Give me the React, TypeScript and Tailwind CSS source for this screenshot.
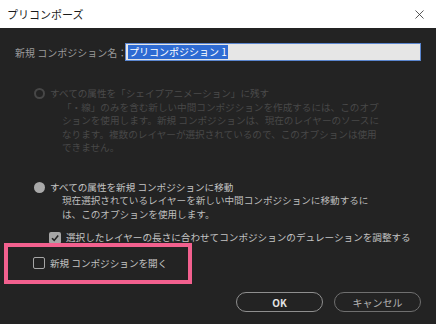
import { X } from "lucide-react";

const jp = "font-['Noto_Sans_CJK_JP','Noto_Sans_CJK_SC',sans-serif]";

const App = () => {
  return (
    <div className={`w-[436px] h-[324px] bg-[#232323] flex flex-col relative overflow-hidden ${jp}`}>
      <div className="h-[28px] bg-white flex items-center justify-between pl-[7px] pr-[9px]">
        <span className="text-[11px] text-[#1b1b1b] leading-none">プリコンポーズ</span>
        <X size={15} strokeWidth={1.3} className="text-[#333]" />
      </div>

      <div className="flex items-center mt-[15px] pl-[15px] pr-[15px] h-[18px]">
        <span className="text-[10px] text-[#9a9a9a] w-[110px] whitespace-nowrap">新規 コンポジション名：</span>
        <div className="flex-1 h-[18px] bg-[#e6e6e6] border border-[#5b86cf] flex items-center px-[2px]">
          <span className="bg-[#2e6bd3] text-white text-[10px] leading-[14px] px-[1px] whitespace-nowrap">プリコンポジション 1</span>
        </div>
      </div>

      <div className="flex flex-col mt-[26px] text-[9.6px] leading-[13.5px] whitespace-nowrap">
        <div className="flex items-center pl-[34px] gap-[5px] text-[#4b4b4b]">
          <span className="w-[11px] h-[11px] rounded-full border-2 border-[#474747]" />
          <span>すべての属性を「シェイプアニメーション」に残す</span>
        </div>
        <div className="pl-[62px] text-[#484848]">
          <div>「・線」のみを含む新しい中間コンポジションを作成するには、このオプ</div>
          <div>ションを使用します。新規 コンポジションは、現在のレイヤーのソースに</div>
          <div>なります。複数のレイヤーが選択されているので、このオプションは使用</div>
          <div>できません。</div>
        </div>
      </div>

      <div className="flex flex-col mt-[26px] text-[9.6px] leading-[13.5px] whitespace-nowrap">
        <div className="flex items-center pl-[34px] gap-[5px] text-[#c4c4c4]">
          <span className="w-[11px] h-[11px] rounded-full bg-[#a9a9a9]" />
          <span>すべての属性を新規 コンポジションに移動</span>
        </div>
        <div className="pl-[62px] text-[#bdbdbd]">
          <div>現在選択されているレイヤーを新しい中間コンポジションに移動するに</div>
          <div>は、このオプションを使用します。</div>
        </div>
      </div>

      <div className="flex items-center mt-[10px] pl-[49px] gap-[5px] text-[9.6px] leading-[13.5px] text-[#c4c4c4] whitespace-nowrap">
        <span className="w-[12px] h-[12px] rounded-[2px] bg-[#a6a6a6] flex items-center justify-center">
          <svg width="10" height="10" viewBox="0 0 10 10">
            <path d="M2 5.2 L4.2 7.4 L8.2 2.6" fill="none" stroke="#232323" strokeWidth="1.6" />
          </svg>
        </span>
        <span>選択したレイヤーの長さに合わせてコンポジションのデュレーションを調整する</span>
      </div>

      <div className="flex items-center mt-[12px] pl-[33px] gap-[5px] text-[9.6px] leading-[13.5px] text-[#c4c4c4] whitespace-nowrap">
        <span className="w-[12px] h-[12px] rounded-[2px] border-[1.5px] border-[#a6a6a6]" />
        <span>新規 コンポジションを開く</span>
      </div>

      <div className="flex justify-end gap-[11px] pr-[15px] mt-[22px]">
        <button className="w-[87px] h-[20px] rounded-full border-[1.5px] border-[#8f8f8f] text-[10px] font-bold text-[#e2e2e2] flex items-center justify-center">
          OK
        </button>
        <button className="w-[87px] h-[20px] rounded-full border-[1.5px] border-[#6f6f6f] text-[10px] text-[#b5b5b5] flex items-center justify-center">
          キャンセル
        </button>
      </div>

      <div className="absolute left-[4px] top-[243px] w-[188px] h-[41px] border-[4px] border-[#f2608e]" />
    </div>
  );
};

export default App;
